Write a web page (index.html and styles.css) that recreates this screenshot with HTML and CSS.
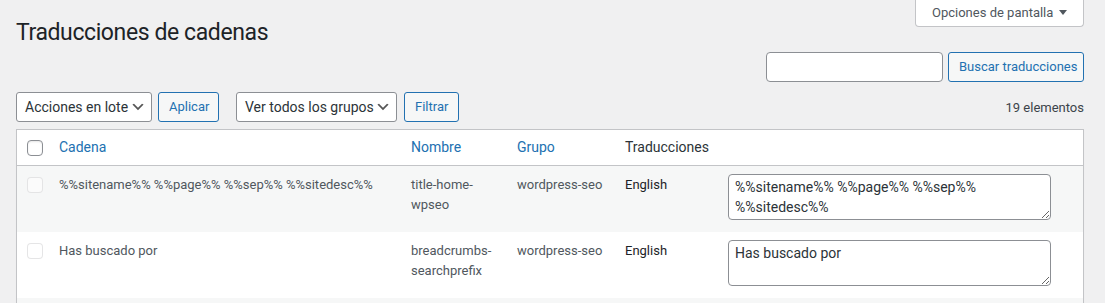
FILE: index.html
```html
<!DOCTYPE html>
<html lang="es">
<head>
<meta charset="utf-8">
<title>Traducciones de cadenas</title>
<link rel="stylesheet" href="styles.css">
</head>
<body>
<div class="wrap">
  <div class="head">
    <h1 class="title">Traducciones de cadenas</h1>
    <button class="screen-opts" type="button">
      <span>Opciones de pantalla</span>
      <svg class="tri" width="8" height="5" viewBox="0 0 8 5"><path d="M0 0h8L4 5z" fill="#50575e"/></svg>
    </button>
  </div>

  <div class="search-row">
    <input class="search-input" type="search" aria-label="Buscar traducciones">
    <button class="btn btn-search" type="button">Buscar traducciones</button>
  </div>

  <div class="tablenav">
    <div class="select select-bulk">
      <span>Acciones en lote</span>
      <svg class="chev" width="16" height="16" viewBox="0 0 20 20"><path d="M5 6l5 5 5-5 2 1-7 7-7-7 2-1z" fill="#555"/></svg>
    </div>
    <button class="btn btn-apply" type="button">Aplicar</button>
    <div class="select select-group">
      <span>Ver todos los grupos</span>
      <svg class="chev" width="16" height="16" viewBox="0 0 20 20"><path d="M5 6l5 5 5-5 2 1-7 7-7-7 2-1z" fill="#555"/></svg>
    </div>
    <button class="btn btn-filter" type="button">Filtrar</button>
    <span class="count">19 elementos</span>
  </div>

  <table class="strings">
    <colgroup>
      <col class="c-check">
      <col class="c-string">
      <col class="c-name">
      <col class="c-group">
      <col class="c-trans">
    </colgroup>
    <thead>
      <tr>
        <th class="check"><input class="cb" type="checkbox"></th>
        <th><a class="sort" href="#">Cadena</a></th>
        <th><a class="sort" href="#">Nombre</a></th>
        <th><a class="sort" href="#">Grupo</a></th>
        <th class="plain">Traducciones</th>
      </tr>
    </thead>
    <tbody>
      <tr class="alt">
        <td class="check"><input class="cb cb-row" type="checkbox"></td>
        <td>%%sitename%% %%page%% %%sep%% %%sitedesc%%</td>
        <td>title-home-wpseo</td>
        <td class="nowrap">wordpress-seo</td>
        <td class="trans">
          <div class="tr-line">
            <label class="lang">English</label>
            <textarea class="tr-input">%%sitename%% %%page%% %%sep%% %%sitedesc%%</textarea>
          </div>
        </td>
      </tr>
      <tr>
        <td class="check"><input class="cb cb-row" type="checkbox"></td>
        <td>Has buscado por</td>
        <td>breadcrumbs-searchprefix</td>
        <td class="nowrap">wordpress-seo</td>
        <td class="trans">
          <div class="tr-line">
            <label class="lang">English</label>
            <textarea class="tr-input">Has buscado por</textarea>
          </div>
        </td>
      </tr>
      <tr class="alt empty">
        <td class="check"></td>
        <td></td>
        <td></td>
        <td></td>
        <td></td>
      </tr>
    </tbody>
  </table>
</div>
</body>
</html>
```

FILE: styles.css
```css
* { box-sizing: border-box; }

html, body {
  margin: 0;
  overflow: hidden;
}

body {
  background: #f0f0f1;
  font-family: "Segoe UI", Roboto, "Liberation Sans", sans-serif;
  font-size: 13px;
  color: #3c434a;
}

.wrap {
  width: 1068px;
  margin-left: 16px;
}

/* heading + screen options */
.head {
  display: flex;
  justify-content: space-between;
  align-items: flex-start;
}

.title {
  margin: 0;
  padding-top: 18px;
  font-size: 23px;
  font-weight: 400;
  line-height: 30px;
  letter-spacing: -0.4px;
  color: #1d2327;
}

.screen-opts {
  width: 169px;
  height: 27px;
  margin: 0;
  padding: 0 16px 1px 16px;
  display: flex;
  align-items: center;
  background: #fff;
  border: 1px solid #c3c4c7;
  border-top: none;
  border-radius: 0 0 4px 4px;
  font-family: inherit;
  font-size: 13px;
  color: #50575e;
}

.screen-opts .tri {
  margin-left: auto;
}

/* search */
.search-row {
  display: flex;
  justify-content: flex-end;
  gap: 5px;
  margin-top: 4px;
}

.search-input {
  width: 177px;
  height: 30px;
  margin: 0;
  background: #fff;
  border: 1px solid #8c8f94;
  border-radius: 4px;
}

.btn {
  height: 30px;
  margin: 0;
  padding: 0 10px;
  background: #f6f7f7;
  border: 1px solid #2271b1;
  border-radius: 3px;
  color: #2271b1;
  font-family: inherit;
  font-size: 13px;
  line-height: 28px;
  text-align: center;
  white-space: nowrap;
}

.btn-search { width: 136px; }

/* tablenav */
.tablenav {
  display: flex;
  align-items: center;
  height: 30px;
  margin-top: 10px;
}

.select {
  height: 30px;
  display: flex;
  align-items: center;
  padding-left: 8px;
  background: #fff;
  border: 1px solid #8c8f94;
  border-radius: 3px;
  color: #2c3338;
  font-size: 14px;
  white-space: nowrap;
}

.select .chev {
  margin-left: auto;
  margin-right: 5px;
  flex: none;
}

.select-bulk { width: 136px; }
.btn-apply { width: 61px; margin-left: 6px; }
.select-group { width: 161px; margin-left: 17px; }
.btn-filter { width: 55px; margin-left: 7px; }

.count {
  margin-left: auto;
  color: #3c434a;
  font-size: 13px;
}

/* table */
.strings {
  width: 100%;
  margin-top: 7px;
  table-layout: fixed;
  border-collapse: separate;
  border-spacing: 0;
  background: #fff;
  border: 1px solid #c3c4c7;
  box-shadow: 0 1px 1px rgba(0, 0, 0, 0.04);
}

.c-check { width: 32px; }
.c-string { width: 352px; }
.c-name { width: 106px; }
.c-group { width: 108px; }

.strings th {
  height: 35px;
  padding: 8px 10px;
  text-align: left;
  font-weight: 400;
  font-size: 14px;
  line-height: 19px;
  border-bottom: 1px solid #c3c4c7;
  vertical-align: middle;
}

.strings th.check {
  padding: 0 0 0 10px;
}

.sort {
  color: #2271b1;
  text-decoration: none;
}

.plain { color: #2c3338; }

.strings td {
  padding: 9px 10px 8px;
  vertical-align: top;
  font-size: 13px;
  line-height: 19.5px;
  color: #50575e;
}

.strings td.trans {
  padding-top: 8px;
}

.strings td.check {
  padding: 11px 0 0 10px;
}

.strings tr.alt td { background: #f6f7f7; }

.strings tr.empty td { height: 66px; }

.nowrap { white-space: nowrap; }

.cb {
  appearance: none;
  -webkit-appearance: none;
  display: block;
  width: 16px;
  height: 16px;
  margin: 0;
  background: #fff;
  border: 1px solid #8c8f94;
  border-radius: 4px;
  box-shadow: inset 0 1px 2px rgba(0, 0, 0, 0.1);
}

.cb-row {
  background: rgba(255, 255, 255, 0.5);
  border-color: rgba(220, 220, 222, 0.75);
  box-shadow: none;
}

.tr-line {
  display: flex;
  align-items: flex-start;
}

.lang {
  width: 103px;
  flex: none;
  padding-top: 1px;
  font-size: 13px;
  line-height: 19.5px;
  color: #1d2327;
}

.tr-input {
  display: block;
  width: 323px;
  height: 46px;
  margin: 0 0 4px 0;
  padding: 2px 6px;
  background: #fff;
  border: 1px solid #8c8f94;
  border-radius: 4px;
  font-family: inherit;
  font-size: 14px;
  line-height: 20px;
  color: #2c3338;
  resize: vertical;
  overflow: hidden;
}
```
